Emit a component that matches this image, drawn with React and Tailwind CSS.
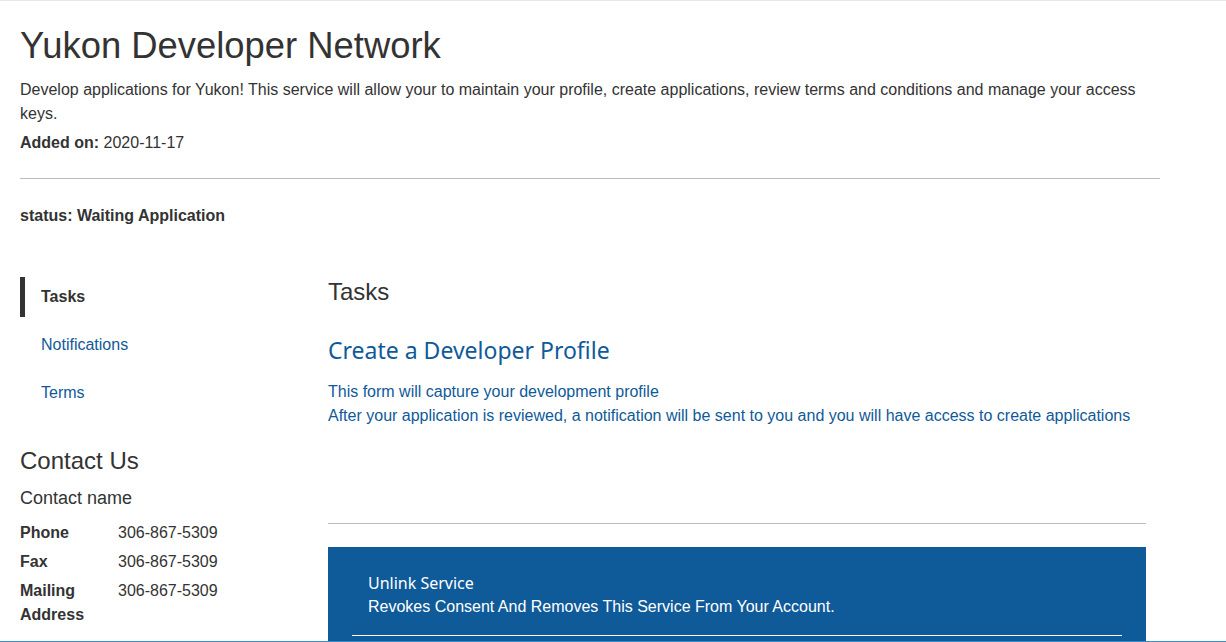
export default function App() {
  const font = { fontFamily: '"Liberation Sans", Arial, sans-serif' };
  return (
    <div className="min-h-[642px] w-full bg-white text-[#333] border-t border-[#e8e8e8] relative" style={font}>
      <div className="px-5 w-[1180px]">
        <h1 className="text-[36.4px] leading-[44px] pt-[23px] text-[#333]">Yukon Developer Network</h1>
        <p className="text-[16px] leading-6 mt-[10px] pr-2">
          Develop applications for Yukon! This service will allow your to maintain your profile, create applications, review terms and conditions and manage your access keys.
        </p>
        <p className="text-[16px] leading-6 mt-[5px]"><span className="font-bold">Added on:</span> 2020-11-17</p>
        <hr className="mt-[23px] border-0 border-t border-[#bbb] w-[1140px]" />
        <p className="text-[16px] leading-6 font-bold mt-[25px]">status: Waiting Application</p>

        <div className="flex mt-[49px]">
          <div className="w-[308px] shrink-0">
            <nav className="flex flex-col">
              <div className="h-10 flex items-center border-l-[5px] border-[#333] pl-4 font-bold text-[16px]">Tasks</div>
              <div className="h-10 mt-2 flex items-center pl-[21px] text-[16px] text-[#0f5a99]">Notifications</div>
              <div className="h-10 mt-2 flex items-center pl-[21px] text-[16px] text-[#0f5a99]">Terms</div>
            </nav>
            <h2 className="text-[24px] leading-8 mt-[32px]">Contact Us</h2>
            <p className="text-[18px] leading-6 mt-[9px]">Contact name</p>
            <div className="mt-[11px] grid grid-cols-[98px_1fr] gap-y-[5px] text-[16px] leading-6">
              <div className="font-bold">Phone</div><div>306-867-5309</div>
              <div className="font-bold">Fax</div><div>306-867-5309</div>
              <div className="font-bold">Mailing<br />Address</div><div>306-867-5309</div>
            </div>
          </div>
          <div className="w-[818px] shrink-0">
            <h2 className="text-[24px] leading-8 mt-[-1px]">Tasks</h2>
            <h3 className="text-[23px] leading-8 mt-[26px] text-[#0f5a99]" style={{ fontFamily: '"Noto Sans", sans-serif' }}>Create a Developer Profile</h3>
            <p className="text-[16px] leading-6 mt-[14px] text-[#0f5a99]">This form will capture your development profile</p>
            <p className="text-[16px] leading-6 text-[#0f5a99]">After your application is reviewed, a notification will be sent to you and you will have access to create applications</p>
            <hr className="mt-[95px] border-0 border-t border-[#bbb]" />
            <div className="mt-[23px] bg-[#0f5a99] pt-[24px] px-6 text-white">
              <div className="px-4">
                <p className="text-[16px] leading-6" style={{ fontFamily: '"Noto Sans", sans-serif' }}>Unlink Service</p>
                <p className="text-[16px] leading-6">Revokes Consent And Removes This Service From Your Account.</p>
              </div>
              <div className="mt-[16px] border-t border-white h-[20px]"></div>
            </div>
          </div>
        </div>
      </div>
      <div className="absolute left-0 right-0 top-[640px] h-px bg-[#3b8fc8]"></div>
    </div>
  );
}
